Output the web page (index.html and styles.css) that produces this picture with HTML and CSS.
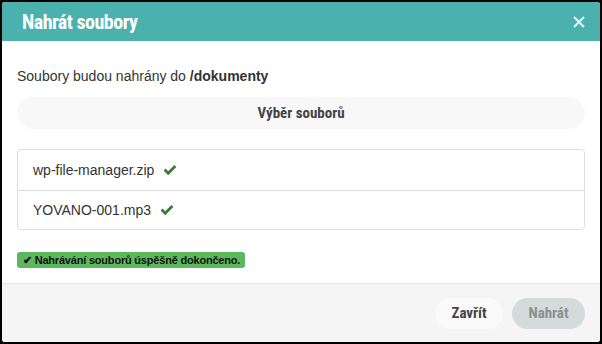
FILE: index.html
```html
<!DOCTYPE html>
<html lang="cs">
<head>
    <meta charset="UTF-8">
    <title>Nahrát soubory</title>
    <link rel="stylesheet" href="styles.css">
</head>
<body>
<div class="modal">
    <div class="modal-header">
        <h4 class="modal-title">Nahrát soubory</h4>
        <button class="close" type="button" aria-label="Zavřít">
            <svg width="12" height="12" viewBox="0 0 12 12"><path d="M1 1L11 11M11 1L1 11" stroke="#e6f4f3" stroke-width="2"/></svg>
        </button>
    </div>
    <div class="modal-body">
        <p class="target">Soubory budou nahrány do <b>/dokumenty</b></p>
        <button class="btn btn-pick" type="button">Výběr souborů</button>
        <ul class="file-list">
            <li>wp-file-manager.zip <svg class="ok" width="14" height="12" viewBox="0 0 14 12"><path d="M0.6 6.6L2.6 4.6L5.2 7.2L11.4 1L13.4 3L5.2 11.2Z" fill="#3d7a3a"/></svg></li>
            <li>YOVANO-001.mp3 <svg class="ok" width="14" height="12" viewBox="0 0 14 12"><path d="M0.6 6.6L2.6 4.6L5.2 7.2L11.4 1L13.4 3L5.2 11.2Z" fill="#3d7a3a"/></svg></li>
        </ul>
        <span class="label-success">✔ Nahrávání souborů úspěšně dokončeno.</span>
    </div>
    <div class="modal-footer">
        <button class="btn btn-close" type="button">Zavřít</button>
        <button class="btn btn-upload" type="button" disabled>Nahrát</button>
    </div>
</div>
</body>
</html>
```

FILE: styles.css
```css
* {
    margin: 0;
    padding: 0;
    box-sizing: border-box;
}

body {
    background: #000000;
    padding: 2px;
    font-family: "Liberation Sans", Arial, sans-serif;
    font-size: 14px;
    color: #333333;
}

.modal {
    width: 598px;
    height: 340px;
    background: #ffffff;
    border-radius: 3px;
    overflow: hidden;
    display: flex;
    flex-direction: column;
}

.modal-header {
    height: 39px;
    background: #4ab1ad;
    display: flex;
    align-items: center;
    justify-content: space-between;
    padding: 0 15px 0 20px;
}

.modal-title,
.btn {
    font-family: "Roboto Condensed", "DejaVu Sans Condensed", "Liberation Sans Narrow", Roboto, sans-serif;
    font-stretch: condensed;
    font-weight: bold;
}

.modal-title {
    font-size: 20px;
    color: #ffffff;
    line-height: 24px;
    letter-spacing: -0.5px;
}

.close {
    border: 0;
    background: none;
    width: 12px;
    height: 12px;
    display: flex;
}

.modal-body {
    flex: 1;
    padding: 25px 15px 0 15px;
}

.target {
    line-height: 20px;
    margin-bottom: 11px;
}

.btn {
    border: 0;
    font-size: 15px;
    height: 32px;
    border-radius: 16px;
    color: #444444;
}

.btn-pick {
    display: block;
    width: 100%;
    background: #f8f8f8;
}

/* seznam nahraných souborů */
.file-list {
    list-style: none;
    margin: 20px 0 21px 0;
    border: 1px solid #dddddd;
    border-radius: 4px;
}

.file-list li {
    height: 40px;
    line-height: 40px;
    padding: 0 15px;
    display: flex;
    align-items: center;
    gap: 9px;
}

.file-list li + li {
    border-top: 1px solid #dddddd;
    height: 39px;
}

.label-success {
    display: inline-block;
    background: #5cb85c;
    color: #111111;
    font-size: 11px;
    font-weight: bold;
    line-height: 16px;
    letter-spacing: -0.2px;
    padding: 0 5px 0 6px;
    border-radius: 3px;
}

.modal-footer {
    height: 59px;
    border-top: 1px solid #e5e5e5;
    background: #f5f5f5;
    display: flex;
    align-items: center;
    justify-content: flex-end;
    gap: 9px;
    padding: 0 15px;
}

.btn-close {
    width: 68px;
    height: 31px;
    background: #fafafa;
}

.btn-upload {
    width: 73px;
    height: 31px;
    background: #d5dbdb;
    color: #8a9090;
}
```
